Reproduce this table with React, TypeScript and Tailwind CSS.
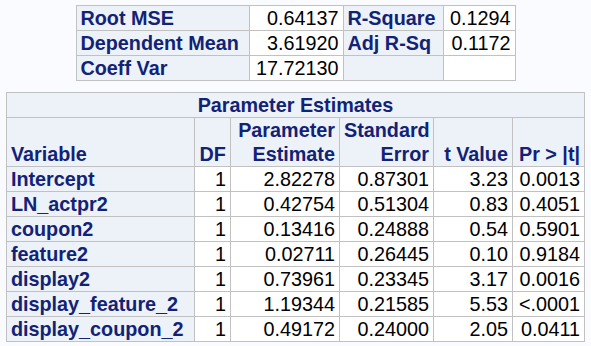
import React from "react";

const fit = [
  ["Root MSE", "0.64137", "R-Square", "0.1294"],
  ["Dependent Mean", "3.61920", "Adj R-Sq", "0.1172"],
  ["Coeff Var", "17.72130", "", ""],
];

const params = [
  ["Intercept", "1", "2.82278", "0.87301", "3.23", "0.0013"],
  ["LN_actpr2", "1", "0.42754", "0.51304", "0.83", "0.4051"],
  ["coupon2", "1", "0.13416", "0.24888", "0.54", "0.5901"],
  ["feature2", "1", "0.02711", "0.26445", "0.10", "0.9184"],
  ["display2", "1", "0.73961", "0.23345", "3.17", "0.0016"],
  ["display_feature_2", "1", "1.19344", "0.21585", "5.53", "<.0001"],
  ["display_coupon_2", "1", "0.49172", "0.24000", "2.05", "0.0411"],
];

const hd = "border border-[#c1c1c1] bg-[#edf2f9] text-[#112277] font-bold px-[4px] py-0 leading-[24px] whitespace-nowrap";
const dt = "border border-[#c1c1c1] bg-white text-black px-[4px] py-0 leading-[24px] text-right whitespace-nowrap";

export default function App() {
  return (
    <div
      className="w-[591px] h-[346px] bg-[#fafbfe] flex flex-col items-center pt-[5px] gap-[11px] text-[19.8px]"
      style={{ fontFamily: '"Liberation Sans", Arial, sans-serif' }}
    >
      <table className="border-collapse table-fixed w-[440px]">
        <colgroup>
          <col className="w-[173px]" />
          <col className="w-[94px]" />
          <col className="w-[100px]" />
          <col className="w-[72px]" />
        </colgroup>
        <tbody>
          {fit.map((r, i) => (
            <tr key={i} className="h-[25px]">
              <td className={`${hd} text-left`}>{r[0]}</td>
              <td className={dt}>{r[1]}</td>
              <td className={`${hd} text-left`}>{r[2]}</td>
              <td className={dt}>{r[3]}</td>
            </tr>
          ))}
        </tbody>
      </table>

      <table className="border-collapse table-fixed w-[579px]">
        <colgroup>
          <col className="w-[188px]" />
          <col className="w-[36px]" />
          <col className="w-[109px]" />
          <col className="w-[94px]" />
          <col className="w-[79px]" />
          <col className="w-[72px]" />
        </colgroup>
        <thead>
          <tr className="h-[25px]">
            <th colSpan={6} className={`${hd} text-center`}>
              Parameter Estimates
            </th>
          </tr>
          <tr>
            <th className={`${hd} text-left align-bottom`}>Variable</th>
            <th className={`${hd} text-right align-bottom`}>DF</th>
            <th className={`${hd} text-right align-bottom`}>
              Parameter
              <br />
              Estimate
            </th>
            <th className={`${hd} text-right align-bottom`}>
              Standard
              <br />
              Error
            </th>
            <th className={`${hd} text-right align-bottom`}>t Value</th>
            <th className={`${hd} text-right align-bottom`}>Pr &gt; |t|</th>
          </tr>
        </thead>
        <tbody>
          {params.map((r) => (
            <tr key={r[0]} className="h-[25px]">
              <td className={`${hd} text-left`}>{r[0]}</td>
              {r.slice(1).map((v, j) => (
                <td key={j} className={dt}>
                  {v}
                </td>
              ))}
            </tr>
          ))}
        </tbody>
      </table>
    </div>
  );
}
